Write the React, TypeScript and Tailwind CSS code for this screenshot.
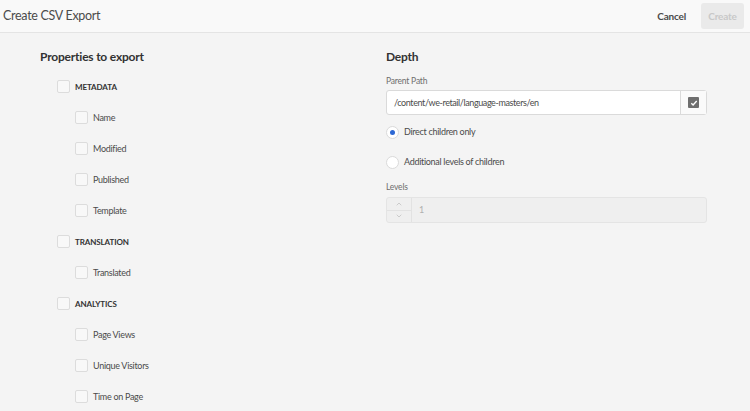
import { ChevronUp, ChevronDown } from 'lucide-react';

const groups = [
    { label: 'METADATA', items: ['Name', 'Modified', 'Published', 'Template'] },
    { label: 'TRANSLATION', items: ['Translated'] },
    { label: 'ANALYTICS', items: ['Page Views', 'Unique Visitors', 'Time on Page'] },
];

function Checkbox() {
    return <span className="w-[13px] h-[13px] shrink-0 rounded-[2px] border border-[#dcdcdc] bg-[#f8f8f8]" />;
}

export default function App() {
    return (
        <div className="w-[750px] h-[411px] overflow-hidden bg-[#f4f4f4] text-[#4b4b4b]" style={{ fontFamily: 'Lato, "Open Sans", sans-serif' }}>
            {/* Header */}
            <div className="h-[33px] flex items-center justify-between bg-[#f9f9f9] border-b border-[#e4e4e4] pl-[3px] pr-[6px]">
                <h1 className="text-[12.5px] tracking-[-0.3px] text-[#4b4b4b]">Create CSV Export</h1>
                <div className="flex items-center gap-[15px]">
                    <button className="text-[10px] tracking-[-0.2px] font-bold text-[#4b4b4b]">Cancel</button>
                    <button className="h-[26px] w-[43px] rounded-[3px] bg-[#eaeaea] text-[10px] tracking-[-0.2px] font-bold text-[#c8c8c8]">Create</button>
                </div>
            </div>

            <div className="flex">
                {/* Properties */}
                <div className="w-[386px] pl-[40px] pt-[16px]">
                    <h2 className="text-[12px] tracking-[-0.2px] font-bold text-[#323232] leading-[16px]">Properties to export</h2>
                    <div className="mt-[6px] pl-[17px]">
                        {groups.map((g) => (
                            <div key={g.label}>
                                <div className="h-[31px] flex items-center gap-[5px]">
                                    <Checkbox />
                                    <span className="text-[8px] tracking-[-0.1px] font-bold text-[#323232]">{g.label}</span>
                                </div>
                                {g.items.map((it) => (
                                    <div key={it} className="h-[31px] flex items-center gap-[5px] pl-[18px]">
                                        <Checkbox />
                                        <span className="text-[9px] tracking-[-0.3px] text-[#4b4b4b]">{it}</span>
                                    </div>
                                ))}
                            </div>
                        ))}
                    </div>
                </div>

                {/* Depth */}
                <div className="pt-[16px]">
                    <h2 className="text-[12px] tracking-[-0.2px] font-bold text-[#323232] leading-[16px]">Depth</h2>
                    <div className="mt-[10px] text-[8.5px] tracking-[-0.2px] text-[#6e6e6e] leading-[12px]">Parent Path</div>
                    <div className="mt-[3px] w-[321px] h-[25px] flex rounded-[3px] border border-[#dadada] bg-white">
                        <div className="flex-1 flex items-center pl-[7px] text-[9px] tracking-[-0.4px] text-[#4b4b4b]">/content/we-retail/language-masters/en</div>
                        <div className="w-[26px] flex items-center justify-center border-l border-[#dadada] bg-[#fafafa]">
                            <span className="w-[11px] h-[11px] rounded-[1px] bg-[#6e6e6e] flex items-center justify-center">
                                <svg width="8" height="8" viewBox="0 0 8 8" fill="none">
                                    <path d="M1.3 4.2 L3.1 5.9 L6.7 2.1" stroke="white" strokeWidth="1.4" />
                                </svg>
                            </span>
                        </div>
                    </div>
                    <div className="mt-[2px] h-[30px] flex items-center gap-[5px]">
                        <span className="w-[13px] h-[13px] rounded-full border border-[#dadada] bg-white flex items-center justify-center">
                            <span className="w-[5px] h-[5px] rounded-full bg-[#2d68d4]" />
                        </span>
                        <span className="text-[9px] tracking-[-0.3px] text-[#4b4b4b]">Direct children only</span>
                    </div>
                    <div className="h-[30px] flex items-center gap-[5px]">
                        <span className="w-[13px] h-[13px] rounded-full border border-[#dadada] bg-white" />
                        <span className="text-[9px] tracking-[-0.3px] text-[#4b4b4b]">Additional levels of children</span>
                    </div>
                    <div className="mt-[4px] text-[8.5px] tracking-[-0.2px] text-[#6e6e6e] leading-[12px]">Levels</div>
                    <div className="mt-[4px] w-[321px] h-[26px] flex rounded-[3px] border border-[#e4e4e4] bg-[#efefef]">
                        <div className="w-[25px] flex flex-col border-r border-[#e2e2e2]">
                            <div className="flex-1 flex items-center justify-center border-b border-[#e2e2e2]">
                                <ChevronUp size={8} color="#b8b8b8" strokeWidth={2} />
                            </div>
                            <div className="flex-1 flex items-center justify-center">
                                <ChevronDown size={8} color="#b8b8b8" strokeWidth={2} />
                            </div>
                        </div>
                        <div className="flex items-center pl-[7px] text-[9px] text-[#b0b0b0]">1</div>
                    </div>
                </div>
            </div>
        </div>
    );
}
